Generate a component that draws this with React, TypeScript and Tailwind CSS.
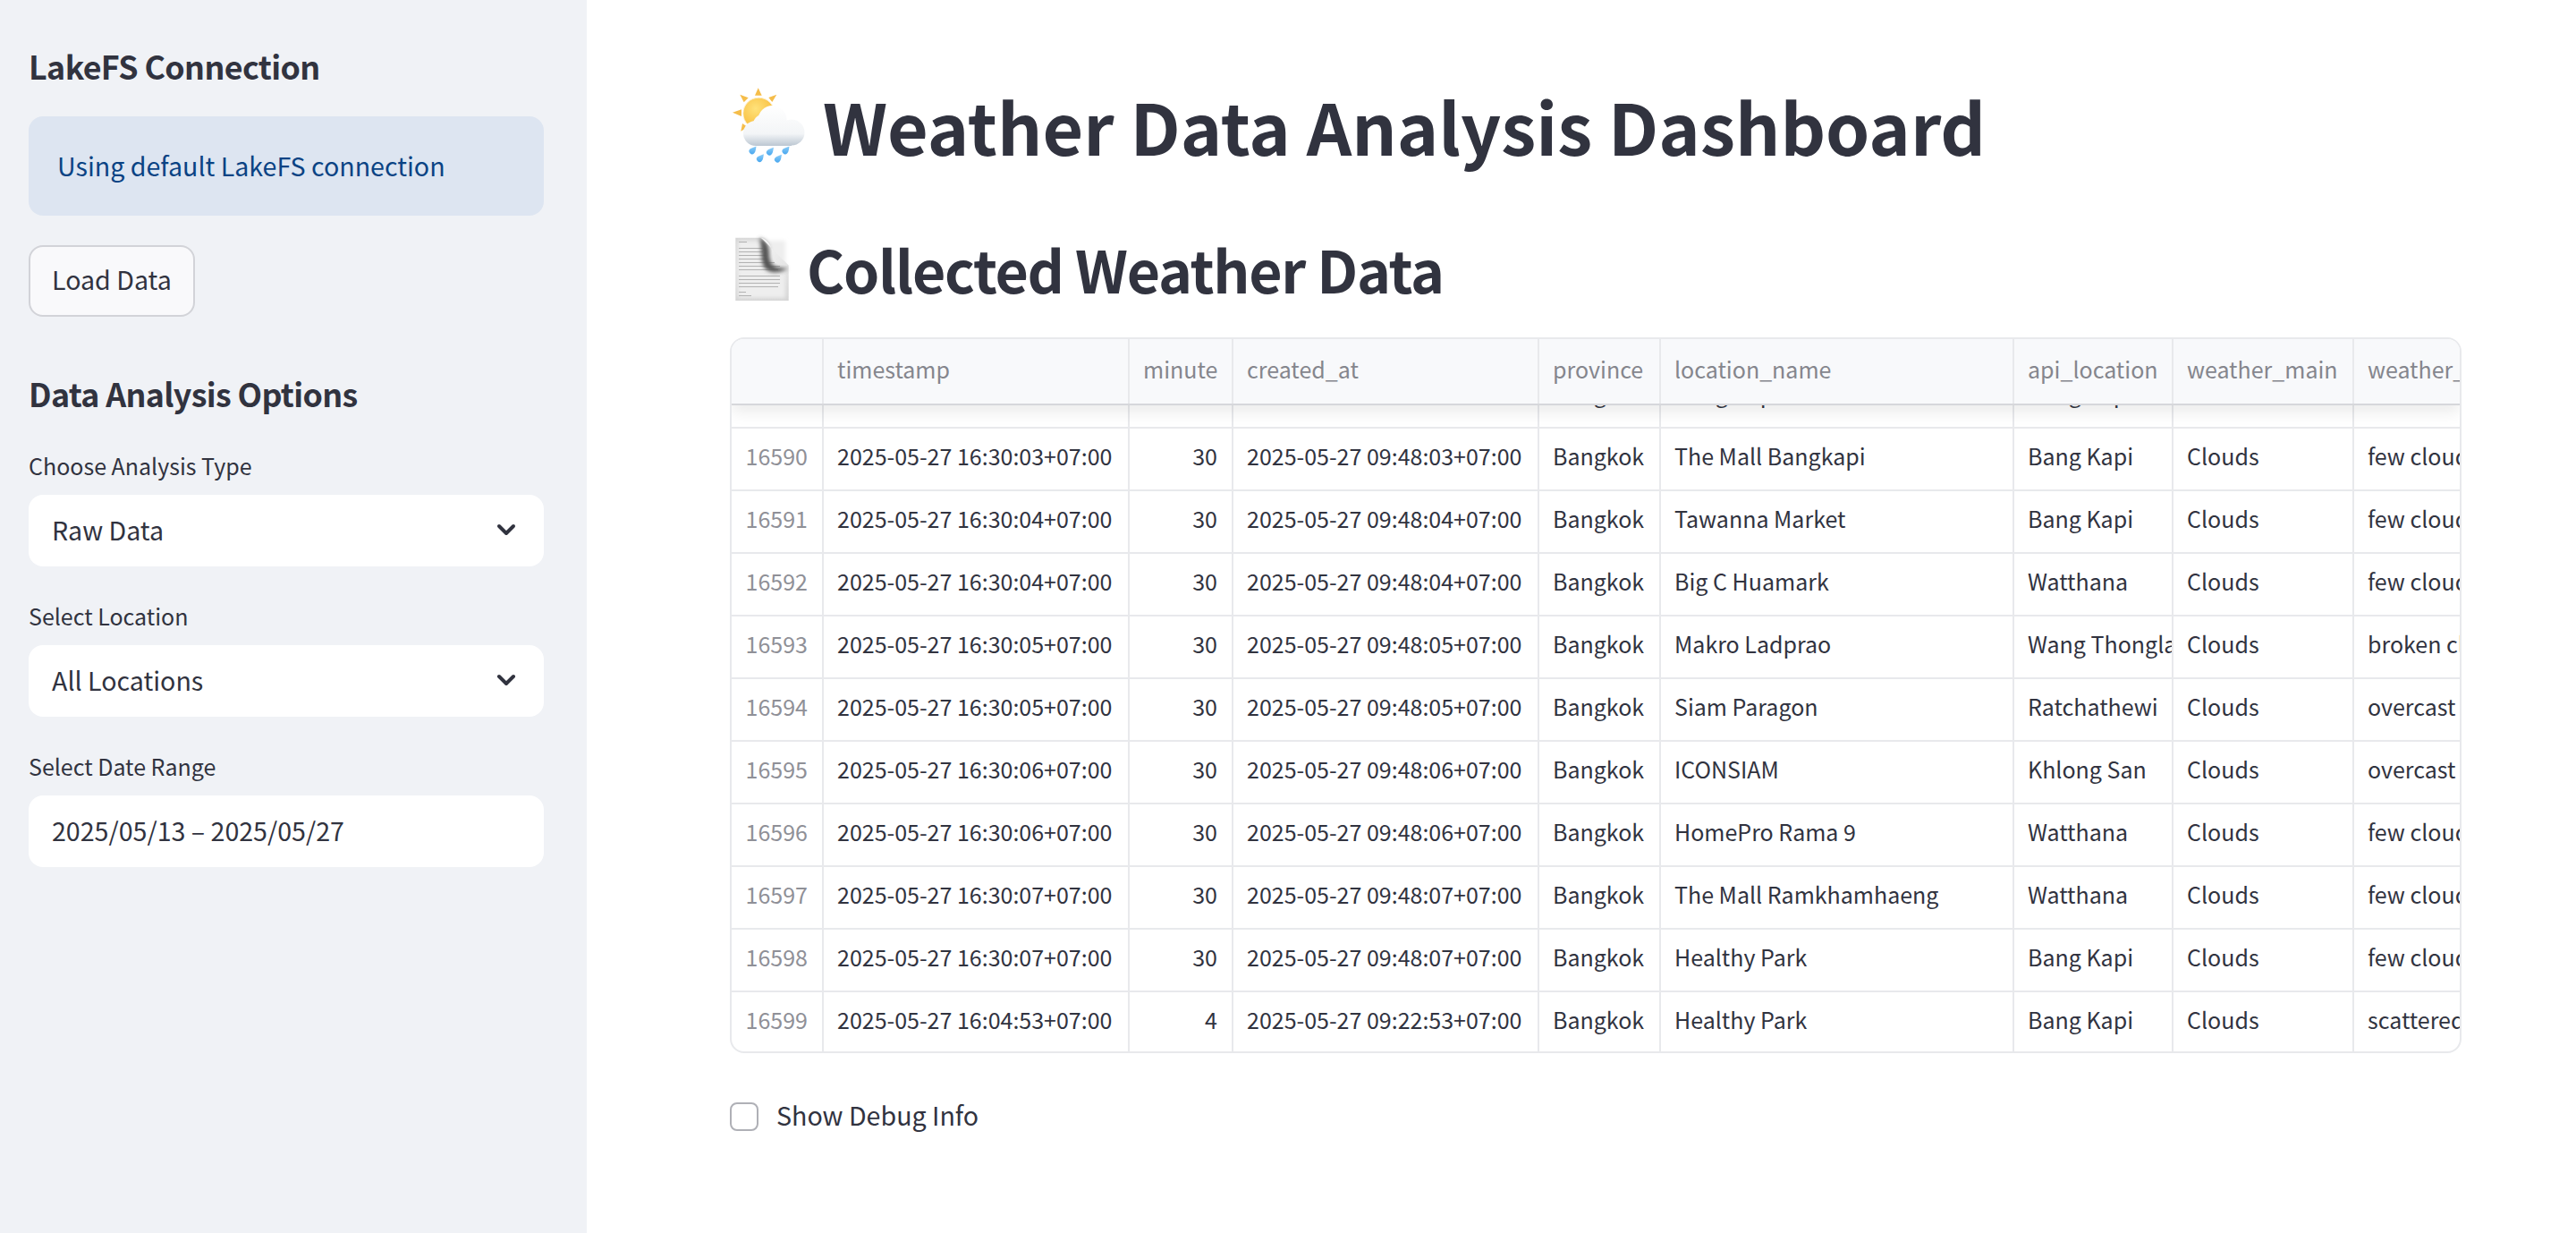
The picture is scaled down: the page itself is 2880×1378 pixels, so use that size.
import { ChevronDown } from "lucide-react";

const columns = ["", "timestamp", "minute", "created_at", "province", "location_name", "api_location", "weather_main", "weather_description"];

const rows = [
  ["16589", "2025-05-27 16:30:03+07:00", "30", "2025-05-27 09:48:03+07:00", "Bangkok", "Bang Kapi", "Bang Kapi", "Clouds", "few clouds"],
  ["16590", "2025-05-27 16:30:03+07:00", "30", "2025-05-27 09:48:03+07:00", "Bangkok", "The Mall Bangkapi", "Bang Kapi", "Clouds", "few clouds"],
  ["16591", "2025-05-27 16:30:04+07:00", "30", "2025-05-27 09:48:04+07:00", "Bangkok", "Tawanna Market", "Bang Kapi", "Clouds", "few clouds"],
  ["16592", "2025-05-27 16:30:04+07:00", "30", "2025-05-27 09:48:04+07:00", "Bangkok", "Big C Huamark", "Watthana", "Clouds", "few clouds"],
  ["16593", "2025-05-27 16:30:05+07:00", "30", "2025-05-27 09:48:05+07:00", "Bangkok", "Makro Ladprao", "Wang Thonglang", "Clouds", "broken clouds"],
  ["16594", "2025-05-27 16:30:05+07:00", "30", "2025-05-27 09:48:05+07:00", "Bangkok", "Siam Paragon", "Ratchathewi", "Clouds", "overcast clouds"],
  ["16595", "2025-05-27 16:30:06+07:00", "30", "2025-05-27 09:48:06+07:00", "Bangkok", "ICONSIAM", "Khlong San", "Clouds", "overcast clouds"],
  ["16596", "2025-05-27 16:30:06+07:00", "30", "2025-05-27 09:48:06+07:00", "Bangkok", "HomePro Rama 9", "Watthana", "Clouds", "few clouds"],
  ["16597", "2025-05-27 16:30:07+07:00", "30", "2025-05-27 09:48:07+07:00", "Bangkok", "The Mall Ramkhamhaeng", "Watthana", "Clouds", "few clouds"],
  ["16598", "2025-05-27 16:30:07+07:00", "30", "2025-05-27 09:48:07+07:00", "Bangkok", "Healthy Park", "Bang Kapi", "Clouds", "few clouds"],
  ["16599", "2025-05-27 16:04:53+07:00", "4", "2025-05-27 09:22:53+07:00", "Bangkok", "Healthy Park", "Bang Kapi", "Clouds", "scattered clouds"],
];

const gridCols = "grid w-max grid-cols-[103px_342px_116px_342px_136px_395px_178px_202px_300px]";

const WeatherEmoji = () => (
  <svg width="88" height="88" viewBox="0 0 88 88" className="shrink-0">
    <defs>
      <radialGradient id="sun" cx="0.4" cy="0.35" r="0.75">
        <stop offset="0" stopColor="#ffe27a" />
        <stop offset="1" stopColor="#f7b733" />
      </radialGradient>
      <linearGradient id="cloud" gradientUnits="userSpaceOnUse" x1="0" y1="22" x2="0" y2="67">
        <stop offset="0" stopColor="#ffffff" />
        <stop offset="0.7" stopColor="#f3f5f7" />
        <stop offset="1" stopColor="#bcc7d2" />
      </linearGradient>
      <linearGradient id="drop" x1="0" y1="0" x2="0" y2="1">
        <stop offset="0" stopColor="#8ccdf8" />
        <stop offset="1" stopColor="#4aa8ef" />
      </linearGradient>
    </defs>
    <g fill="#f5bd4a">
      <polygon points="31.7,2.3 28,10.7 35.7,10.7" />
      <polygon points="52.3,9.7 43.3,13 47.3,18" />
      <polygon points="11.3,9.7 15.7,18.3 20.7,13.3" />
      <polygon points="3,29.7 13,26.3 13,34" />
      <polygon points="12.3,50.7 14,42 20,46" />
    </g>
    <circle cx="32.3" cy="30.7" r="17.5" fill="url(#sun)" stroke="#fdf0cf" strokeWidth="1" />
    <g fill="url(#cloud)">
      <circle cx="47.5" cy="38" r="16" />
      <circle cx="37" cy="43" r="11" />
      <circle cx="29" cy="53" r="14" />
      <circle cx="69" cy="52" r="14.5" />
      <circle cx="58" cy="47" r="10" />
      <rect x="29" y="48" width="40" height="19" />
    </g>
    <g fill="url(#drop)">
      <path d="M29.5 67.5 C29 70.5 29 73.5 27.2 75.3 A3.3 3.3 0 0 1 22.5 70.6 C24.3 69.2 27 68.5 29.5 67.5 Z" />
      <path d="M48.9 68.8 C48.4 71.8 48.4 74.8 46.6 76.6 A3.3 3.3 0 0 1 41.9 71.9 C43.7 70.5 46.4 69.8 48.9 68.8 Z" />
      <path d="M66.5 67.5 C66 70.5 66 73.5 64.2 75.3 A3.3 3.3 0 0 1 59.5 70.6 C61.3 69.2 64 68.5 66.5 67.5 Z" />
      <path d="M37.9 76.2 C37.4 79.2 37.4 82.2 35.6 84 A3.3 3.3 0 0 1 30.9 79.3 C32.7 77.9 35.4 77.2 37.9 76.2 Z" />
      <path d="M57.9 76.8 C57.4 79.8 57.4 82.8 55.6 84.6 A3.3 3.3 0 0 1 50.9 79.9 C52.7 78.5 55.4 77.8 57.9 76.8 Z" />
    </g>
  </svg>
);

const DocumentEmoji = () => (
  <svg width="72" height="88" viewBox="0 0 72 88" className="shrink-0">
    <defs>
      <linearGradient id="page" x1="0" y1="0" x2="0" y2="1">
        <stop offset="0" stopColor="#d6d6d6" />
        <stop offset="0.5" stopColor="#e2e2e2" />
        <stop offset="1" stopColor="#d4d4d4" />
      </linearGradient>
      <linearGradient id="fold" x1="0" y1="0" x2="1" y2="1">
        <stop offset="0" stopColor="#f6f6f6" />
        <stop offset="1" stopColor="#e4e4e4" />
      </linearGradient>
      <filter id="soft" x="-30%" y="-30%" width="160%" height="160%">
        <feGaussianBlur stdDeviation="2" />
      </filter>
      <filter id="lines" x="-5%" y="-5%" width="110%" height="110%">
        <feGaussianBlur stdDeviation="0.5" />
      </filter>
    </defs>
    <polygon points="6.3,9.7 34,9.7 65.7,40.7 65.7,80 6.3,80" fill="url(#page)" />
    <polygon points="9,13 62,13 62,77 9,77" fill="#eeeeee" filter="url(#soft)" />
    <g fill="#b2b2b2" filter="url(#lines)">
      <rect x="10" y="14" width="9" height="1" />
      <rect x="10" y="21" width="27" height="1" />
      <rect x="10" y="25" width="27" height="1" />
      <rect x="10" y="29" width="30" height="1" />
      <rect x="10" y="33" width="32" height="1" />
      <rect x="10" y="37" width="40" height="1" />
      <rect x="10" y="41" width="46" height="1" />
      <rect x="10" y="45" width="44" height="1" />
      <rect x="10" y="52" width="46" height="1" />
      <rect x="10" y="56" width="46" height="1" />
      <rect x="10" y="60" width="46" height="1" />
      <rect x="10" y="64" width="44" height="1" />
      <rect x="10" y="70" width="8" height="1" />
      <rect x="10" y="74" width="14" height="1" />
    </g>
    <path d="M33 10 C42 12 44 20 44 28 C44 36 47 42 55 43 L65 44 C56 50 42 50 38 42 C34 34 36 20 33 10 Z" fill="#555555" filter="url(#soft)" />
    <path d="M35 9.7 L65.7 40.7 C58 40 52 39 50 36 C47 32 48 26 46 20 C44 15 40 11 35 9.7 Z" fill="url(#fold)" />
  </svg>
);

const Field = ({ label, value, chevron }: { label: string; value: string; chevron?: boolean }) => (
  <div className="flex flex-col">
    <label className="flex h-[40px] items-center pb-[2px] text-[25px] leading-[36px]">{label}</label>
    <div className="mt-[12px] flex h-[80px] items-center justify-between rounded-[16px] bg-white pb-[2px] pl-[26px] pr-[26px] text-[28.6px] leading-[40px]">
      <span>{value}</span>
      {chevron && <ChevronDown size={32} strokeWidth={3} className="text-[#31333f]" />}
    </div>
  </div>
);

const Cell = ({ value, col, header }: { value: string; col: number; header?: boolean }) => {
  const right = !header && (col === 0 || col === 2);
  const color = header ? "text-[#85868d]" : col === 0 ? "text-[#8f9097]" : "text-[#31333f]";
  return (
    <div
      className={`flex min-w-0 items-center overflow-hidden whitespace-nowrap border-r-2 border-[#e8e9ec] pl-[15px] pr-[16px] text-[25px] leading-[36px] ${color} ${
        right ? "justify-end" : "justify-start"
      } ${header ? "h-[72px] bg-[#f8f9fb] pb-[6px]" : "h-[70px] border-b-2 pb-[9px]"}`}
    >
      {value}
    </div>
  );
};

const DataTable = () => (
  <div className="h-[800px] w-[1936px] overflow-hidden rounded-[16px] border-2 border-[#e8e9ec] bg-white">
    <div className="relative z-10 h-[74px] border-b-2 border-[#d6d7db] bg-[#f8f9fb] shadow-[0_8px_16px_rgba(0,0,0,0.08)]">
      <div className={gridCols}>
        {columns.map((c, i) => (
          <Cell key={i} value={c} col={i} header />
        ))}
      </div>
    </div>
    <div className="h-[724px] overflow-hidden">
      <div className="-mt-[44px]">
        {rows.map((row) => (
          <div key={row[0]} className={gridCols}>
            {row.map((v, i) => (
              <Cell key={i} value={v} col={i} />
            ))}
          </div>
        ))}
      </div>
    </div>
  </div>
);

export default function App() {
  return (
    <div className="flex h-screen w-full overflow-hidden bg-white font-['Noto_Sans_CJK_SC','Liberation_Sans',sans-serif] text-[#31333f]">
      {/* Sidebar */}
      <aside className="w-[656px] shrink-0 bg-[#f0f2f6] pl-[32px] pr-[48px] pt-[48px]">
        <h3 className="text-[35.8px] font-semibold leading-[50px] tracking-[-0.6px]">LakeFS Connection</h3>
        <div className="mt-[32px] flex h-[111px] items-center rounded-[16px] bg-[#dde5f1] px-[32px] pb-[2px] text-[28.6px] leading-[40px] text-[#0a4384]">
          Using default LakeFS connection
        </div>
        <button className="mt-[33px] flex h-[80px] items-center rounded-[16px] border-2 border-[#d2d3d8] bg-[#f9f9fb] px-[24px] pb-[4px] text-[28.6px] leading-[40px]">
          Load Data
        </button>
        <h3 className="mt-[60px] text-[35.8px] font-semibold leading-[50px] tracking-[-0.67px]">Data Analysis Options</h3>
        <div className="mt-[37px] flex flex-col gap-[36px]">
          <Field label="Choose Analysis Type" value="Raw Data" chevron />
          <Field label="Select Location" value="All Locations" chevron />
          <Field label="Select Date Range" value="2025/05/13 – 2025/05/27" />
        </div>
      </aside>

      {/* Main */}
      <main className="min-w-0 flex-1 pl-[160px] pr-[128px] pt-[96px]">
        <h1 className="flex h-[88px] items-center gap-[16px] text-[78.8px] font-bold leading-[88px]">
          <WeatherEmoji />
          <span>Weather Data Analysis Dashboard</span>
        </h1>
        <h2 className="mt-[72px] flex h-[88px] items-center gap-[14px] text-[64.4px] font-semibold leading-[88px] tracking-[-1.3px]">
          <DocumentEmoji />
          <span>Collected Weather Data</span>
        </h2>
        <div className="mt-[33px]">
          <DataTable />
        </div>
        <label className="mt-[51px] flex items-center gap-[20px] text-[28.6px] leading-[40px]">
          <span className="h-[32px] w-[32px] rounded-[8px] border-2 border-[#afb0b6] bg-white" />
          <span className="-translate-y-[2px]">Show Debug Info</span>
        </label>
      </main>
    </div>
  );
}
